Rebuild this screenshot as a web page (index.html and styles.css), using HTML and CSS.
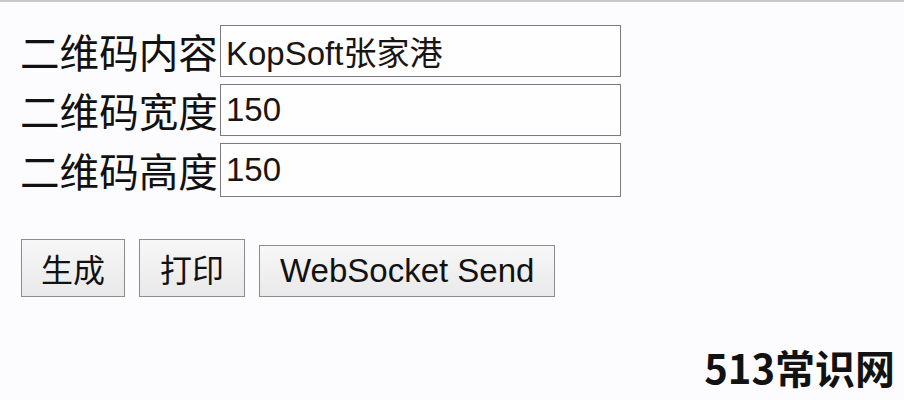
FILE: index.html
```html
<!DOCTYPE html>
<html lang="zh-CN">
<head>
<meta charset="utf-8">
<title>二维码</title>
<link rel="stylesheet" href="styles.css">
</head>
<body>
<div class="page">
  <div class="form">
    <div class="row">
      <label class="label" for="content">二维码内容</label>
      <input class="field" id="content" type="text" value="KopSoft张家港">
    </div>
    <div class="row">
      <label class="label" for="width">二维码宽度</label>
      <input class="field" id="width" type="text" value="150">
    </div>
    <div class="row row-tall">
      <label class="label" for="height">二维码高度</label>
      <input class="field field-tall" id="height" type="text" value="150">
    </div>
  </div>
  <div class="buttons">
    <button class="btn btn-cjk" type="button">生成</button>
    <button class="btn btn-cjk btn-wide" type="button">打印</button>
    <button class="btn btn-latin" type="button">WebSocket Send</button>
  </div>
  <div class="watermark">513常识网</div>
</div>
</body>
</html>
```

FILE: styles.css
```css
html, body {
  margin: 0;
  padding: 0;
  background: #fcfbfd;
}

body {
  width: 904px;
  height: 400px;
  overflow: hidden;
  font-family: "Noto Sans CJK SC", "Liberation Sans", sans-serif;
  color: #111;
}

.page {
  position: relative;
  box-sizing: border-box;
  height: 400px;
  border-top: 2px solid #c9c9cb;
  padding: 23px 0 0 20px;
}

.form {
  display: flex;
  flex-direction: column;
  gap: 7px;
}

.row {
  display: flex;
  align-items: center;
  height: 52px;
}

.row-tall {
  height: 54px;
}

.label {
  width: 200px;
  font-size: 39.6px;
  line-height: 52px;
  white-space: nowrap;
  color: #111;
}

.field {
  box-sizing: border-box;
  width: 401px;
  height: 52px;
  margin: 0;
  padding: 0 5px;
  border: 1px solid #7b7b7d;
  background: #fefefe;
  font-family: "Liberation Sans", "Noto Sans CJK SC", sans-serif;
  font-size: 33px;
  color: #1a1414;
  outline: none;
}

.field-tall {
  height: 54px;
}

.buttons {
  display: flex;
  align-items: flex-end;
  gap: 14px;
  margin-top: 42px;
  margin-left: 1px;
  height: 58px;
}

.btn {
  box-sizing: border-box;
  margin: 0;
  padding: 0 19px;
  border: 1px solid #8c8c8e;
  border-radius: 0;
  background: linear-gradient(#f7f7f7, #e9e9ea);
  color: #111;
  font-size: 32px;
  white-space: nowrap;
}

.btn-wide {
  padding: 0 20px;
}

.btn-cjk {
  height: 58px;
  font-family: "Noto Sans CJK SC", sans-serif;
  font-weight: 400;
}

.btn-latin {
  height: 52px;
  padding: 0 20px;
  font-family: "Liberation Sans", sans-serif;
  font-size: 33px;
}

.watermark {
  position: absolute;
  right: 9px;
  top: 337px;
  font-family: "Noto Sans CJK SC", sans-serif;
  font-weight: 700;
  font-size: 40px;
  line-height: 56px;
  color: #121212;
}
```
